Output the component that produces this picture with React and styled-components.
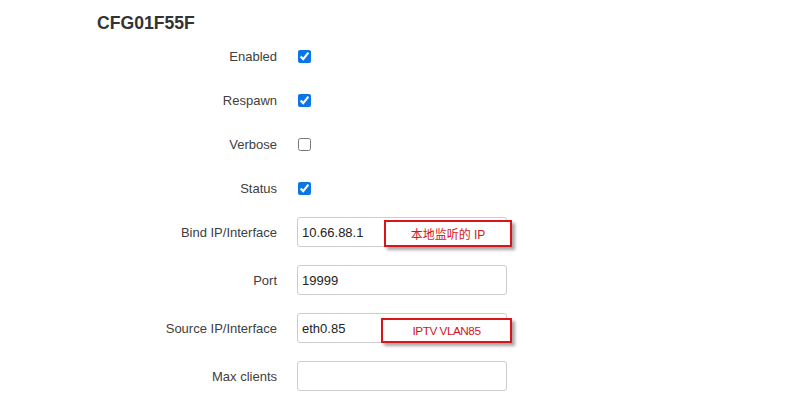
import React from 'react';
import styled, { createGlobalStyle } from 'styled-components';

const GlobalStyle = createGlobalStyle`
  html, body {
    margin: 0;
    padding: 0;
    background: #fff;
  }
  body {
    font-family: "Liberation Sans", Arial, "Noto Sans CJK SC", sans-serif;
    color: #404040;
  }
`;

const Page = styled.div`
  width: 795px;
  height: 405px;
  overflow: hidden;
  padding: 13px 0 0 97px;
  box-sizing: border-box;
`;

const Title = styled.h3`
  margin: 0;
  font-size: 17.6px;
  font-weight: bold;
  color: #333;
  line-height: 20px;
  height: 21px;
`;

const Group = styled.div`
  display: flex;
  flex-direction: column;
  margin-top: ${p => p.$offset || 0}px;
`;

const Row = styled.div`
  display: grid;
  grid-template-columns: 180px 210px;
  column-gap: 20px;
  align-items: center;
  height: ${p => p.$height}px;
`;

const Label = styled.label`
  text-align: right;
  font-size: 13px;
  color: #404040;
`;

const Field = styled.div`
  position: relative;
  display: flex;
  align-items: center;
`;

const Check = styled.input.attrs({ type: 'checkbox' })`
  margin: 0 0 0 1px;
  width: 13px;
  height: 13px;
  accent-color: #0b75e8;
`;

const TextInput = styled.input.attrs({ type: 'text' })`
  width: 210px;
  height: 30px;
  box-sizing: border-box;
  border: 1px solid #cccccc;
  border-radius: 3px;
  padding: 0 4px;
  font-family: "Liberation Sans", Arial, sans-serif;
  font-size: 13px;
  color: #222;
  outline: none;
`;

const Note = styled.div`
  position: absolute;
  left: ${p => p.$left}px;
  top: ${p => p.$top}px;
  width: ${p => p.$width}px;
  height: ${p => p.$h}px;
  box-sizing: border-box;
  border: 2px solid #d8141c;
  background: #fff;
  box-shadow: 3px 3px 3px rgba(0, 0, 0, 0.35);
  color: #d0161e;
  font-family: "Liberation Sans", Arial, "Noto Sans CJK SC", sans-serif;
  font-size: ${p => p.$size}px;
  letter-spacing: ${p => p.$spacing}px;
  display: flex;
  align-items: center;
  justify-content: center;
`;

const checks = [
  { label: 'Enabled', checked: true },
  { label: 'Respawn', checked: true },
  { label: 'Verbose', checked: false },
  { label: 'Status', checked: true },
];

const fields = [
  { label: 'Bind IP/Interface', value: '10.66.88.1', note: { text: '本地监听的 IP', left: 87, top: 3, width: 128, h: 27, size: 12, spacing: 0 } },
  { label: 'Port', value: '19999' },
  { label: 'Source IP/Interface', value: 'eth0.85', note: { text: 'IPTV VLAN85', left: 84, top: 5, width: 131, h: 25, size: 11.8, spacing: -0.5 } },
  { label: 'Max clients', value: '' },
];

export default function App() {
  return (
    <Page>
      <GlobalStyle />
      <Title>CFG01F55F</Title>
      <Group>
        {checks.map(c => (
          <Row key={c.label} $height={44}>
            <Label>{c.label}</Label>
            <Field>
              <Check defaultChecked={c.checked} />
            </Field>
          </Row>
        ))}
      </Group>
      <Group $offset={-2}>
        {fields.map(f => (
          <Row key={f.label} $height={48}>
            <Label>{f.label}</Label>
            <Field>
              <TextInput defaultValue={f.value} />
              {f.note && (
                <Note
                  $left={f.note.left}
                  $top={f.note.top}
                  $width={f.note.width}
                  $h={f.note.h}
                  $size={f.note.size}
                  $spacing={f.note.spacing}
                >
                  {f.note.text}
                </Note>
              )}
            </Field>
          </Row>
        ))}
      </Group>
    </Page>
  );
}
